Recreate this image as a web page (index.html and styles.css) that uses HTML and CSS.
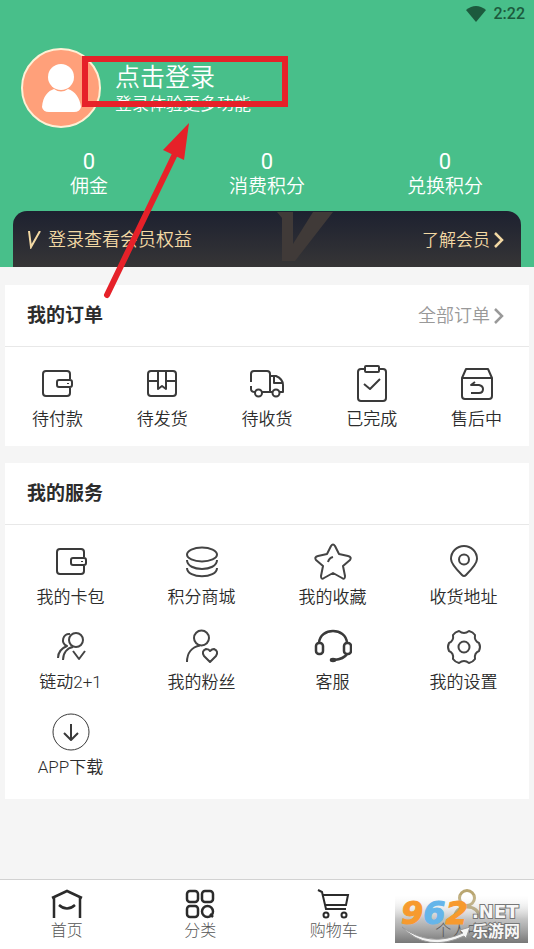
FILE: index.html
```html
<!DOCTYPE html>
<html lang="zh-CN">
<head>
<meta charset="utf-8">
<meta name="viewport" content="width=device-width, initial-scale=1">
<title>个人中心</title>
<link rel="stylesheet" href="styles.css">
</head>
<body>
<svg class="defs" aria-hidden="true">
  <symbol id="wallet" viewBox="0 0 38 38"><path d="M32 14V9Q32 6 29 6H8Q5 6 5 9V28Q5 31 8 31H29Q32 31 32 28V23"/><rect x="19" y="15" width="15" height="7" rx="2"/><path d="M30 18v1"/></symbol>
  <symbol id="chevron" viewBox="0 0 10 16"><path d="M1 1l7 7-7 7" stroke-width="2.500"/></symbol>
</svg>
<main class="page">
  <header class="hero">
    <div class="status">
      <svg class="wifi" viewBox="0 0 20 16" aria-hidden="true"><path d="M0 4Q10-4 20 4L10 16z"/></svg>
      <span>2:22</span>
    </div>
    <a class="profile" href="#login">
      <svg class="avatar" viewBox="0 0 80 80" aria-hidden="true"><circle cx="40" cy="40" r="39" fill="#ffa07a" stroke="#fff0d5" stroke-width="2"/><circle cx="40" cy="29" r="13" fill="#fff"/><path d="M21 59C22 48 27 43 33 41Q40 46 47 41C54 43 59 50 60 59Q59 64 53 64H28Q22 64 21 59z" fill="#fff"/></svg>
      <span class="who"><strong>点击登录</strong><span>登录体验更多功能</span></span>
    </a>
    <svg class="marker" viewBox="0 0 206 250" aria-hidden="true"><rect x="3" y="3" width="200" height="45"/><path class="shaft" d="M25 239L94 96"/><path class="tip" d="M107 67L81 94L102 104z"/></svg>
    <dl class="stats">
      <div><dt>佣金</dt><dd>0</dd></div>
      <div><dt>消费积分</dt><dd>0</dd></div>
      <div><dt>兑换积分</dt><dd>0</dd></div>
    </dl>
    <a class="vip" href="#vip">
      <svg class="vip-mark" viewBox="0 0 56 50" aria-hidden="true"><path d="M0 0H16V32L36 0H56L18 49H5V6z"/></svg>
      <svg class="vip-v" viewBox="0 0 14 18" aria-hidden="true"><path d="M2 0L4 16 13 0"/></svg>
      <span class="vip-text">登录查看会员权益</span>
      <span class="vip-more">了解会员</span>
      <svg class="chevron" aria-hidden="true"><use href="#chevron"/></svg>
    </a>
  </header>

  <section class="card">
    <div class="card-head">
      <h2>我的订单</h2>
      <a class="all" href="#orders">全部订单<svg class="chevron" aria-hidden="true"><use href="#chevron"/></svg></a>
    </div>
    <nav class="orders" aria-label="我的订单">
      <a href="#pay"><svg class="icon"><use href="#wallet"/></svg>待付款</a>
      <a href="#ship"><svg class="icon" viewBox="0 0 38 38"><rect x="5" y="6" width="28" height="25" rx="3"/><path d="M5 16H15M23 16H33M15 6V24L19 21 23 24V6"/></svg>待发货</a>
      <a href="#receive"><svg class="icon" viewBox="0 0 38 38"><path d="M3 17V9Q3 6 6 6H19Q22 6 22 9V27H14M3 21V24Q3 27 7 27M22 11H28Q35 14 35 20V27H32M25 27H22M26 12V18H34"/><circle cx="10.500" cy="28" r="3.500"/><circle cx="28" cy="28" r="3.500"/></svg>待收货</a>
      <a href="#done"><svg class="icon" viewBox="0 0 38 38"><path d="M12 4H8Q5 4 5 7V33Q5 36 8 36H30Q33 36 33 33V7Q33 4 30 4H26"/><rect x="12" y="1" width="14" height="6" rx="1"/><path d="M11 19l6 5 10-10"/></svg>已完成</a>
      <a href="#after"><svg class="icon" viewBox="0 0 38 38"><path d="M4 13L8 4H30L34 13V31Q34 34 31 34H7Q4 34 4 31zM4 13H34M17 17L13 20H21Q25 21 25 24 25 28 21 28H13"/></svg>售后中</a>
    </nav>
  </section>

  <section class="card services-card">
    <div class="card-head"><h2>我的服务</h2></div>
    <nav class="services" aria-label="我的服务">
      <a href="#cards"><svg class="icon"><use href="#wallet"/></svg>我的卡包</a>
      <a href="#mall"><svg class="icon thin" viewBox="0 0 38 38"><ellipse cx="19" cy="11.500" rx="15" ry="7"/><path d="M4 17C4 29 34 29 34 17M4 25C4 36 34 36 34 25"/></svg>积分商城</a>
      <a href="#fav"><svg class="icon thin" viewBox="0 0 38 38"><path d="M17 3Q19 0 21 3L25 11 34 13Q38 14 36 17L29 23 31 33Q31 37 28 35L19 30 10 35Q7 37 7 33L9 23 2 17Q0 14 4 13L13 11zM14 19Q15 15 19 14"/></svg>我的收藏</a>
      <a href="#address"><svg class="icon thin" viewBox="0 0 38 38"><path d="M17 32Q6 21 6 16A13 13 0 0 1 32 16Q32 21 21 32 19 34 17 32z"/><circle cx="19" cy="16.500" r="5"/></svg>收货地址</a>
      <a href="#link"><svg class="icon thin" viewBox="0 0 38 38"><circle cx="24" cy="12" r="7"/><path d="M18 6C11 5 8 15 15 18 10 20 6 24 6 30M21 19C15 20 11 25 11 32M21 23l6 8 6-8"/></svg>链动2+1</a>
      <a href="#fans"><svg class="icon thin" viewBox="0 0 38 38"><circle cx="18.500" cy="10" r="7.500"/><path d="M17 17.500C9 19 4 25 4 34M27 34L21 28Q18 23 23 21 26 21 27 23 29 21 31 21 36 23 33 28z"/></svg>我的粉丝</a>
      <a href="#support"><svg class="icon" viewBox="0 0 38 38"><g stroke-width="2.500"><path d="M5 15C6-1 32-1 33 15M33 26Q30 31 20 32"/><rect x="2" y="15" width="7" height="11" rx="3"/><rect x="30" y="15" width="7" height="11" rx="3"/><ellipse cx="19" cy="32" rx="2" ry="1"/></g></svg>客服</a>
      <a href="#settings"><svg class="icon thin" viewBox="0 0 38 38"><path d="M34 15Q36 19 34 23 29 25 30 31 28 34 24 35 19 31 14 35 10 34 8 31 9 25 4 23 2 19 4 15 9 13 8 7 10 4 14 3 19 7 24 3 28 4 30 7 29 13 34 15z"/><circle cx="19" cy="19" r="5.500"/></svg>我的设置</a>
      <a href="#app"><svg class="icon" viewBox="0 0 38 38"><circle class="hair" cx="19" cy="19" r="18"/><path d="M19 11V26M12 20l7 7 7-7"/></svg>APP下载</a>
    </nav>
  </section>

  <nav class="tabs" aria-label="主导航">
    <a href="#home"><svg class="tab-icon" viewBox="0 0 34 30"><path stroke-width="2.500" d="M2 9L17 2 32 9M4 8V29M30 8V29M9 16Q17 23 25 16"/></svg>首页</a>
    <a href="#category"><svg class="tab-icon" viewBox="0 0 34 30"><g stroke-width="2.500"><rect x="4" y="2" width="11" height="11" rx="3"/><rect x="19" y="2" width="11" height="11" rx="3"/><rect x="4" y="17" width="11" height="11" rx="3"/><circle cx="24.500" cy="22.500" r="5.500"/><path d="M27 25L30 28"/></g></svg>分类</a>
    <a href="#cart"><svg class="tab-icon" viewBox="0 0 34 30"><path d="M1 1L5 3 9 20H29M6 6H31L29 16H8"/><circle cx="9" cy="26" r="2.500"/><circle cx="27" cy="26" r="2.500"/></svg>购物车</a>
    <a class="current" href="#me"><svg class="tab-icon me" viewBox="0 0 34 30"><circle cx="17" cy="9" r="7.500"/><path d="M4 29Q6 18 17 18T30 29"/></svg>个人中心</a>
    <svg class="watermark" viewBox="0 0 133 48" role="img" aria-label="962.NET 乐游网">
      <defs>
        <linearGradient id="shade" x2="0" y2="1"><stop stop-color="#fff" stop-opacity=".1"/><stop offset=".5" stop-color="#888" stop-opacity=".5"/><stop offset="1" stop-color="#555" stop-opacity=".8"/></linearGradient>
      </defs>
      <rect width="133" height="48" fill="url(#shade)"/>
      <path class="swoosh" d="M7 32Q35 53 68 38L65 35 75 32 71 43 69 41Q32 58 7 32z"/>
      <text class="digits" x="6" y="29"><tspan fill="#f79a2e" stroke="#f79a2e">9</tspan><tspan fill="#65b5ea" stroke="#65b5ea">6</tspan><tspan fill="#f79a2e" stroke="#f79a2e">2</tspan></text>
      <text class="net" x="77" y="23">.NET</text>
      <text class="site" x="77" y="42">乐游网</text>
    </svg>
  </nav>
</main>
</body>
</html>
```
FILE: styles.css
```css
* { box-sizing: border-box; }
body {
  margin: 0;
  background: #f5f5f5;
  color: #2c2c2c;
  font-family: Roboto, "Noto Sans CJK SC", sans-serif;
  font-size: 17px;
  font-weight: 350;
  line-height: 24px;
}
a { color: inherit; text-decoration: none; }
h2, dl, dd { margin: 0; }
svg { display: block; flex: none; }
.defs { position: absolute; width: 0; height: 0; }
.page { display: flex; flex-direction: column; min-height: 100vh; }

.hero { position: relative; background: #48bf8a; color: #fff; }
.status {
  display: flex;
  justify-content: flex-end;
  align-items: center;
  gap: 8px;
  height: 28px;
  padding-right: 9px;
  color: #1c5a3d;
  font-size: 16px;
  font-weight: 500;
}
.wifi { width: 20px; height: 16px; fill: currentColor; }
.profile { display: flex; gap: 14px; padding: 20px 21px 0; }
.avatar { width: 80px; height: 80px; }
.who { display: flex; flex-direction: column; padding-top: 14px; }
.who strong { font-size: 25px; font-weight: 350; line-height: 32px; }
.who span { line-height: 20px; }
.marker { position: absolute; z-index: 2; left: 82px; top: 56px; width: 206px; height: 250px; fill: none; stroke: #e62129; stroke-width: 6; }
.marker .shaft { stroke-linecap: round; }
.marker .tip { fill: #e62129; stroke: none; }
.stats { display: grid; grid-template-columns: repeat(3, 1fr); padding-top: 21px; text-align: center; }
.stats div { display: flex; flex-direction: column-reverse; }
.stats dt { font-size: 19px; }
.stats dd { font-size: 22px; font-weight: 400; line-height: 26px; }
.vip {
  position: relative;
  display: flex;
  align-items: center;
  height: 56px;
  margin: 12px 13px 0;
  padding: 2px 17px 0 14px;
  border-radius: 14px 14px 0 0;
  background: linear-gradient(#1d2130, #363536);
  color: #f3d9a4;
}
.vip-mark { position: absolute; left: 264px; top: 1px; width: 56px; height: 50px; fill: #403a38; }
.vip-v { width: 14px; height: 18px; margin-right: 7px; fill: none; stroke: currentColor; stroke-width: 2; }
.vip-text { position: relative; font-size: 18px; }
.vip-more { margin-left: auto; }
.chevron { width: 10px; height: 16px; margin-left: 4px; fill: none; stroke: currentColor; }

.card { margin: 18px 5px 0; background: #fff; }
.services-card { margin-top: 17px; }
.card-head {
  display: flex;
  justify-content: space-between;
  align-items: center;
  height: 62px;
  padding: 0 25px 0 22px;
  border-bottom: 1px solid #e8e8e8;
}
h2 { font-size: 19px; font-weight: 700; }
.all { display: flex; align-items: center; color: #999; font-size: 18px; }
.orders, .services { display: grid; text-align: center; }
.orders { grid-template-columns: repeat(5, 1fr); padding: 18px 0 15px; }
.services { grid-template-columns: repeat(4, 1fr); row-gap: 19px; padding: 18px 0 20px; }
.orders a, .services a { display: flex; flex-direction: column; align-items: center; gap: 4px; }
.icon { width: 38px; height: 38px; fill: none; stroke: #3a3a3a; stroke-width: 2; stroke-linejoin: round; }
.icon.thin { stroke: #444; }
.hair { stroke-width: 1; }

.tabs {
  position: relative;
  display: grid;
  grid-template-columns: repeat(4, 1fr);
  height: 70px;
  margin-top: auto;
  padding-top: 9px;
  border-top: 1px solid #d2d2d2;
  background: #fff;
  color: #555;
  font-size: 16px;
  font-weight: 300;
}
.tabs a { display: flex; flex-direction: column; align-items: center; }
.tabs .current { color: #222; }
.tab-icon { width: 34px; height: 30px; fill: none; stroke: #2b2b2b; stroke-width: 2; }
.tab-icon.me { stroke: #b9a671; stroke-width: 3; }
.watermark { position: absolute; right: 6px; bottom: 6px; width: 133px; height: 48px; }
.swoosh { fill: #f4f4f4; stroke: #999; stroke-width: 1; }
.digits { font: italic 700 32px "DejaVu Sans", sans-serif; stroke-width: 1; }
.net, .site { fill: #f7f7f7; stroke: #777; stroke-width: 2; paint-order: stroke; }
.net { font: 700 18px "DejaVu Sans", sans-serif; }
.site { font: 700 16px "Noto Sans CJK SC", sans-serif; }
```
